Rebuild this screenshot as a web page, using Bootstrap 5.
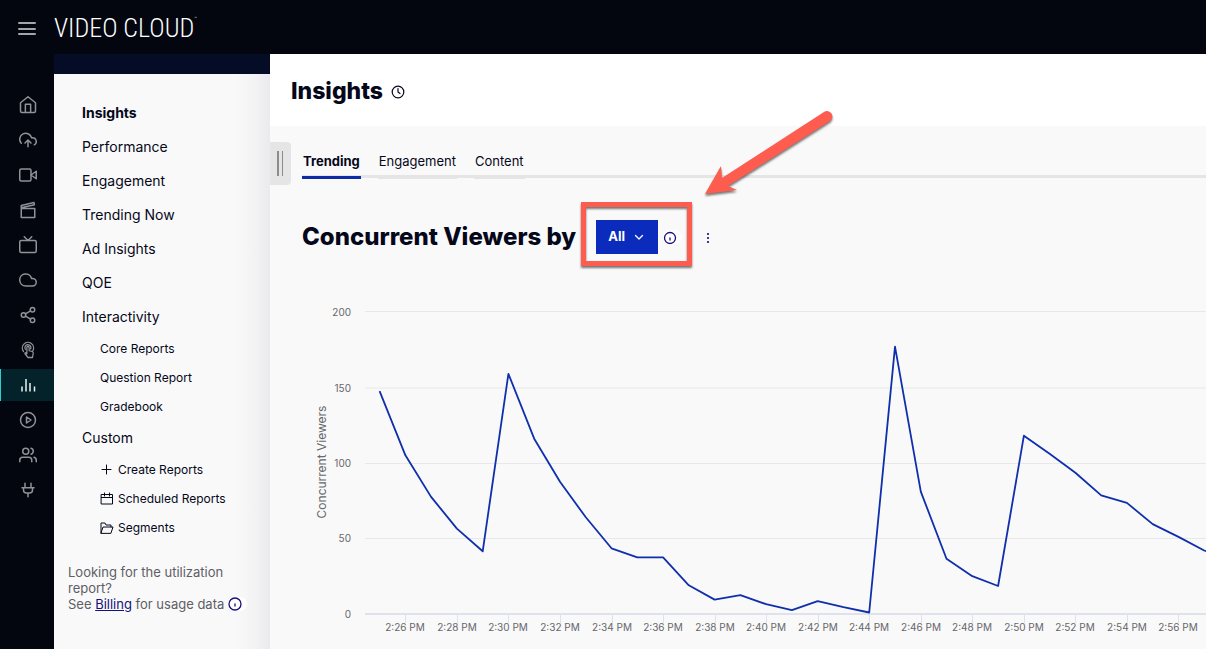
<!DOCTYPE html>
<html lang="en">
<head>
<meta charset="utf-8">
<meta name="viewport" content="width=device-width, initial-scale=1">
<title>Insights - Video Cloud</title>
<link href="https://cdn.jsdelivr.net/npm/bootstrap@5.3.0/dist/css/bootstrap.min.css" rel="stylesheet">
<style>
  body { font-family: Inter, "Open Sans", sans-serif; font-size: 14px; color: #05081a; background: #f9f9f9; overflow-x: hidden; }
  a { color: inherit; text-decoration: none; }
  svg { display: block; flex: none; }
  .stroke { fill: none; stroke: currentColor; stroke-linecap: round; stroke-linejoin: round; }
  .stroke-flat { stroke-linecap: butt; }
  .topbar { background: #03060f; height: 54px; padding-left: 17px; gap: 17px; padding-top: 2px; }
  .menu-toggle { color: #a3a5aa; }
  .brand { font-family: "Roboto Condensed", "Liberation Sans Narrow", "Liberation Sans", sans-serif; font-weight: 300; font-size: 26px; line-height: 52px; color: #fff; }
  .brand sup { font-size: 5px; top: -17px; }
  .shell { min-height: calc(100vh - 54px); }
  .rail { background: #03060f; width: 54px; padding-top: 35px; gap: 3px; color: #8f9297; }
  .rail a { height: 32px; padding-left: 1px; }
  .rail a.current { background: #04222a; color: #e8f4f4; padding-left: 0; border-left: 1px solid #3cc; }
  .panel { width: 216px; border-top: 20px solid #050c26; background: linear-gradient(to right, #f9f9f9 84%, #f3f3f4 93%, #eaeaed 100%); padding: 22px 14px 0; }
  .panel-list { padding-left: 14px; }
  .panel-list a { display: flex; align-items: center; height: 34px; padding-bottom: 2px; }
  .panel-list ul a { height: 29px; font-size: 12px; gap: 4px; padding-left: 18px; padding-bottom: 0; }
  .panel-note { color: #5d5e66; font-size: 13px; line-height: 16px; margin-top: 22px; }
  .panel-note a { color: #14107c; text-decoration: underline; }
  .dot-info { color: #14107c; }
  .info-pill { background: #fff; border-radius: 8px; padding-right: 5px; }
  .main-area { min-width: 0; }
  .page-head { height: 72px; padding-left: 21px; gap: 8px; padding-top: 4px; }
  .page-head h1 { font-size: 23px; font-weight: 800; }
  .work { padding-left: 32px; }
  .grip { left: 0; top: 88px; width: 21px; height: 43px; background: #e5e5e5; border-radius: 0 4px 4px 0; gap: 3px; }
  .grip i { width: 1px; height: 25px; background: #8c8c8c; }
  .grip i:first-child { width: 2px; margin-left: 7px; }
  .tabs { padding-top: 25px; gap: 17px; font-size: 13px; box-shadow: inset 0 -1px #f9f9f9, inset 0 -4px #e5e5e5; height: 53px; }
  .tabs a { line-height: 20px; border-bottom: 3px solid #e5e5e5; height: 28px; padding: 0 1px; }
  .tabs a.current { font-weight: 700; border-color: #0d2aa8; }
  .widget-head { padding-top: 41px; }
  .widget-head h2 { font-size: 24px; font-weight: 800; line-height: 34px; }
  .picker { margin-left: 20px; gap: 5px; }
  .btn-picker { width: 62px; height: 34px; background: #0a2bbb; color: #fff; font-size: 13px; font-weight: 700; border: 0; border-radius: 0; gap: 9px; padding: 0 0 0 12px; }
  .btn-picker:hover { background: #0a2bbb; color: #fff; }
  .callout-box { left: -15px; top: -18px; width: 111px; height: 64px; border: 5px solid #fd5c4f; filter: drop-shadow(0 2px 1px #0008); pointer-events: none; }
  .callout-arrow { left: 105px; top: -113px; filter: drop-shadow(0 2px 1px #0008); pointer-events: none; }
  .kebab { margin-left: 19px; }
  .chart { width: 100%; height: auto; margin-top: 36px; }
  .chart text { fill: #66676b; font-size: 10px; }
  .chart .axis-name { font-size: 12px; }
</style>
</head>
<body>
<header class="topbar d-flex align-items-center">
  <button class="menu-toggle btn p-0 border-0" aria-label="Menu"><svg width="20" height="16" viewBox="0 0 20 16" class="stroke" stroke-width="2"><path d="M2 3h16M2 9h16M2 14h16"/></svg></button>
  <a href="#" class="brand">VIDEO CLOUD<sup>™</sup></a>
</header>
<div class="shell d-flex">
  <nav class="rail d-flex flex-column flex-shrink-0" aria-label="Modules">
    <a href="#" aria-label="Home" class="d-flex align-items-center justify-content-center"><svg width="18" height="18" viewBox="0 0 24 24" class="stroke" stroke-width="2"><path d="M2 9l10-8 10 8v11a2 2 0 0 1-2 2H4a2 2 0 0 1-2-2zM8.500 22V11h7v11"/></svg></a>
    <a href="#" aria-label="Upload" class="d-flex align-items-center justify-content-center"><svg width="18" height="18" viewBox="0 0 24 24" class="stroke" stroke-width="2"><path d="M16 16l-4-4-4 4M12 12v9M20.390 18.390A5 5 0 0 0 18 9h-1.260A8 8 0 1 0 3 16.300"/></svg></a>
    <a href="#" aria-label="Media" class="d-flex align-items-center justify-content-center"><svg width="18" height="18" viewBox="0 0 24 24" class="stroke" stroke-width="2"><path d="M23 7l-7 5 7 5z"/><rect x="1" y="4" width="15" height="16" rx="2"/></svg></a>
    <a href="#" aria-label="Studio" class="d-flex align-items-center justify-content-center"><svg width="18" height="18" viewBox="0 0 24 24" class="stroke" stroke-width="2"><path d="M3 10h18v12H3zM3 9V6l17-4 .5 3z"/></svg></a>
    <a href="#" aria-label="Players" class="d-flex align-items-center justify-content-center"><svg width="18" height="18" viewBox="0 0 24 24" class="stroke" stroke-width="2"><rect x="1" y="6" width="22" height="16" rx="2"/><path d="M17 1l-5 5-5-5"/></svg></a>
    <a href="#" aria-label="Cloud" class="d-flex align-items-center justify-content-center"><svg width="18" height="18" viewBox="0 0 24 24" class="stroke" stroke-width="2"><path d="M18 10h-1.260A8 8 0 1 0 9 20h9a5 5 0 0 0 0-10z"/></svg></a>
    <a href="#" aria-label="Social" class="d-flex align-items-center justify-content-center"><svg width="18" height="18" viewBox="0 0 24 24" class="stroke" stroke-width="2"><circle cx="18" cy="5" r="3"/><circle cx="6" cy="12" r="3"/><circle cx="18" cy="19" r="3"/><path d="M8.600 13.500l6.800 4M15.400 6.500l-6.800 4"/></svg></a>
    <a href="#" aria-label="Interactivity" class="d-flex align-items-center justify-content-center"><svg width="18" height="18" viewBox="0 0 24 24" class="stroke" stroke-width="1.700"><path d="M6 14a7.500 7.500 0 1 1 12.500-1M8.500 11a4 4 0 1 1 7-.5M10.500 17V8.500a1.500 1.500 0 0 1 3 0V13l4 1c1 .3 1.500 1 1.500 2l-1 6h-6l-4-5c-.6-1 .8-2 1.600-1.200z"/></svg></a>
    <a href="#" aria-label="Analytics" class="current d-flex align-items-center justify-content-center"><svg width="18" height="18" viewBox="0 0 18 18" class="stroke stroke-flat" stroke-width="1.500"><path d="M3 15.500v-5M7 15.500V3M11 15.500V7M15.500 15.500v-5"/></svg></a>
    <a href="#" aria-label="Live" class="d-flex align-items-center justify-content-center"><svg width="18" height="18" viewBox="0 0 24 24" class="stroke" stroke-width="2"><circle cx="12" cy="12" r="10"/><path d="M10 8l6 4-6 4z"/></svg></a>
    <a href="#" aria-label="Users" class="d-flex align-items-center justify-content-center"><svg width="18" height="18" viewBox="0 0 24 24" class="stroke" stroke-width="2"><path d="M17 21v-2a4 4 0 0 0-4-4H5a4 4 0 0 0-4 4v2M23 21v-2a4 4 0 0 0-3-3.870M16 3.130a4 4 0 0 1 0 7.750"/><circle cx="9" cy="7" r="4"/></svg></a>
    <a href="#" aria-label="Integrations" class="d-flex align-items-center justify-content-center"><svg width="18" height="18" viewBox="0 0 24 24" class="stroke" stroke-width="2"><path d="M8 3v6M16 3v6M4 9h16M6 9v3a4 4 0 0 0 4 4h4a4 4 0 0 0 4-4V9M12 16v5"/></svg></a>
  </nav>
  <aside class="panel flex-shrink-0">
    <ul class="panel-list list-unstyled mb-0">
      <li><a href="#" class="fw-bold">Insights</a></li>
      <li><a href="#">Performance</a></li>
      <li><a href="#">Engagement</a></li>
      <li><a href="#">Trending Now</a></li>
      <li><a href="#">Ad Insights</a></li>
      <li><a href="#">QOE</a></li>
      <li><a href="#">Interactivity</a>
        <ul class="list-unstyled">
          <li><a href="#">Core Reports</a></li>
          <li><a href="#">Question Report</a></li>
          <li><a href="#">Gradebook</a></li>
        </ul>
      </li>
      <li><a href="#">Custom</a>
        <ul class="list-unstyled">
          <li><a href="#"><svg width="14" height="14" viewBox="0 0 14 14" class="stroke"><path d="M6.500 2v9M2 6.500h9"/></svg>Create Reports</a></li>
          <li><a href="#"><svg width="14" height="14" viewBox="0 0 14 14" class="stroke"><path d="M1.500 2.500h11v9.500h-11zM1.500 5.500h11M4.500 1v3M9.500 1v3"/></svg>Scheduled Reports</a></li>
          <li><a href="#"><svg width="14" height="14" viewBox="0 0 14 14" class="stroke"><path d="M1 12V2h4l1 2h5v2M1 12L3 6h10l-2 6z"/></svg>Segments</a></li>
        </ul>
      </li>
    </ul>
    <div class="panel-note">Looking for the utilization report?
      <div class="d-flex align-items-center text-nowrap">See&nbsp;<a href="#">Billing</a>&nbsp;for usage data&nbsp;<span class="info-pill"><svg width="14" height="14" viewBox="0 0 14 14" class="dot-info stroke" stroke-width="1.300"><circle cx="7" cy="7" r="6"/><path d="M7 7v2"/></svg></span></div>
    </div>
  </aside>
  <main class="main-area flex-grow-1 position-relative">
    <div class="page-head bg-white d-flex align-items-center">
      <h1 class="mb-0">Insights</h1>
      <svg width="14" height="14" viewBox="0 0 14 14" class="stroke" stroke-width="1.200"><circle cx="7" cy="7" r="5.800"/><path d="M7 3.500V7l2 1.500"/></svg>
    </div>
    <button class="grip btn p-0 border-0 position-absolute d-flex align-items-center" aria-label="Collapse panel"><i></i><i></i></button>
    <div class="work">
      <nav class="tabs d-flex" aria-label="Reports">
        <a href="#" class="current">Trending</a><a href="#">Engagement</a><a href="#">Content</a>
      </nav>
      <div class="widget-head d-flex align-items-center">
        <h2 class="mb-0 text-nowrap">Concurrent Viewers by</h2>
        <div class="picker d-flex align-items-center position-relative">
          <button class="btn btn-picker d-flex align-items-center">All<svg width="10" height="10" viewBox="0 0 10 10" class="stroke" stroke-width="1.300"><path d="M1.500 3.500L5 7l3.500-3.500"/></svg></button>
          <span class="info-pill"><svg width="14" height="14" viewBox="0 0 14 14" class="dot-info stroke" stroke-width="1.300"><circle cx="7" cy="8" r="5.500"/><path d="M7 8v2"/></svg></span>
          <div class="callout-box position-absolute"></div>
          <svg class="callout-arrow position-absolute" width="140" height="100" viewBox="0 0 140 100"><path fill="#fd5c4f" d="M123 5a5 5 0 0 1 6 9L27 79l9 4-32 4 16-28 1 12z"/></svg>
        </div>
        <button class="kebab btn p-0 border-0" aria-label="More"><svg width="14" height="14" viewBox="0 0 14 14" fill="#14107c"><circle cx="7" cy="4" r="1.100"/><circle cx="7" cy="8" r="1.100"/><circle cx="7" cy="12" r="1.100"/></svg></button>
      </div>
      <svg class="chart" viewBox="0 0 904 359" role="img" aria-label="Concurrent viewers over time">
        <path stroke="#e8e8ea" d="M63 21.500h841M63 98h841M63 173.500h841M63 248.500h841"/>
        <path stroke="#dfe2ec" stroke-width="2" d="M63 324h841"/>
        <g id="times"></g>
        <g text-anchor="end"><text x="49" y="26">200</text><text x="49" y="102">150</text><text x="49" y="177">100</text><text x="49" y="252">50</text><text x="49" y="328">0</text></g>
        <text class="axis-name" transform="translate(24 172) rotate(-90)" text-anchor="middle">Concurrent Viewers</text>
        <polyline id="series" fill="none" stroke="#0f2fac" stroke-width="1.800" stroke-linejoin="round"/>
      </svg>
    </div>
  </main>
</div>
<script src="https://cdn.jsdelivr.net/npm/bootstrap@5.3.0/dist/js/bootstrap.bundle.min.js"></script>
<script>
  // Viewers per minute from 2:25 PM
  const viewers = [147.500,105,77.500,56.500,41.500,159,116,87.500,64,43.500,37.500,37.500,19,9.500,12.500,6.500,2.500,8.500,4.500,1,177,81,36.500,25,18.500,118,106,93.500,78.500,73.500,59.500,51,42,36];
  const step = 25.77, x0 = 77.6;
  document.getElementById('series').setAttribute('points',
    viewers.map((v, i) => (x0 + i * step).toFixed(1) + ',' + (324 - v * 1.511).toFixed(1)).join(' '));
  let marks = '';
  for (let i = 1; i < 32; i += 2) {
    const x = Math.round(x0 + i * step);
    marks += `<path stroke="#dfe2ec" d="M${x}.5 325v8"/><text x="${x}" y="341" text-anchor="middle">2:${25 + i} PM</text>`;
  }
  document.getElementById('times').innerHTML = marks;
</script>
</body>
</html>
